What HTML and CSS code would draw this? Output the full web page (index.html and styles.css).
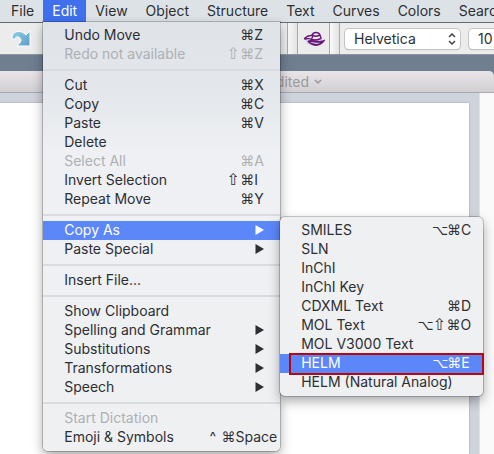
FILE: index.html
```html
<!DOCTYPE html>
<html lang="en">
<head>
<meta charset="utf-8">
<title>Edit menu</title>
<link rel="stylesheet" href="styles.css">
</head>
<body>
<nav class="menubar" aria-label="Menu bar">
  <button class="menubar-item">File</button>
  <div class="menubar-group">
    <button class="menubar-item is-open" aria-expanded="true">Edit</button>
    <div class="menu menu-main" role="menu" aria-label="Edit">
      <button class="item" role="menuitem"><span>Undo Move</span><span class="keys"><i class="mod">⌘</i><span class="key">Z</span></span></button>
      <button class="item" role="menuitem" disabled><span>Redo not available</span><span class="keys"><i class="mod shift">⇧</i><i class="mod">⌘</i><span class="key">Z</span></span></button>
      <hr class="separator">
      <button class="item" role="menuitem"><span>Cut</span><span class="keys"><i class="mod">⌘</i><span class="key">X</span></span></button>
      <button class="item" role="menuitem"><span>Copy</span><span class="keys"><i class="mod">⌘</i><span class="key">C</span></span></button>
      <button class="item" role="menuitem"><span>Paste</span><span class="keys"><i class="mod">⌘</i><span class="key">V</span></span></button>
      <button class="item" role="menuitem"><span>Delete</span></button>
      <button class="item" role="menuitem" disabled><span>Select All</span><span class="keys"><i class="mod">⌘</i><span class="key">A</span></span></button>
      <button class="item" role="menuitem"><span>Invert Selection</span><span class="keys"><i class="mod shift">⇧</i><i class="mod">⌘</i><span class="key">I</span></span></button>
      <button class="item" role="menuitem"><span>Repeat Move</span><span class="keys"><i class="mod">⌘</i><span class="key">Y</span></span></button>
      <hr class="separator">
      <div class="submenu-group">
        <button class="item is-active" role="menuitem" aria-expanded="true"><span>Copy As</span><svg class="arrow" viewBox="0 0 9 10"><path d="M0.5 0L9 5L0.5 10Z"/></svg></button>
        <div class="menu menu-sub" role="menu" aria-label="Copy As">
          <button class="item" role="menuitem"><span>SMILES</span><span class="keys"><i class="mod option">⌥</i><i class="mod">⌘</i><span class="key">C</span></span></button>
          <button class="item" role="menuitem"><span>SLN</span></button>
          <button class="item" role="menuitem"><span>InChI</span></button>
          <button class="item" role="menuitem"><span>InChI Key</span></button>
          <button class="item" role="menuitem"><span>CDXML Text</span><span class="keys"><i class="mod">⌘</i><span class="key">D</span></span></button>
          <button class="item" role="menuitem"><span>MOL Text</span><span class="keys"><i class="mod option">⌥</i><i class="mod shift">⇧</i><i class="mod">⌘</i><span class="key">O</span></span></button>
          <button class="item" role="menuitem"><span>MOL V3000 Text</span></button>
          <button class="item is-active is-marked" role="menuitem"><span>HELM</span><span class="keys"><i class="mod option">⌥</i><i class="mod">⌘</i><span class="key">E</span></span></button>
          <button class="item" role="menuitem"><span>HELM (Natural Analog)</span></button>
        </div>
      </div>
      <button class="item" role="menuitem"><span>Paste Special</span><svg class="arrow" viewBox="0 0 9 10"><path d="M0.5 0L9 5L0.5 10Z"/></svg></button>
      <hr class="separator">
      <button class="item" role="menuitem"><span>Insert File...</span></button>
      <hr class="separator">
      <button class="item" role="menuitem"><span>Show Clipboard</span></button>
      <button class="item" role="menuitem"><span>Spelling and Grammar</span><svg class="arrow" viewBox="0 0 9 10"><path d="M0.5 0L9 5L0.5 10Z"/></svg></button>
      <button class="item" role="menuitem"><span>Substitutions</span><svg class="arrow" viewBox="0 0 9 10"><path d="M0.5 0L9 5L0.5 10Z"/></svg></button>
      <button class="item" role="menuitem"><span>Transformations</span><svg class="arrow" viewBox="0 0 9 10"><path d="M0.5 0L9 5L0.5 10Z"/></svg></button>
      <button class="item" role="menuitem"><span>Speech</span><svg class="arrow" viewBox="0 0 9 10"><path d="M0.5 0L9 5L0.5 10Z"/></svg></button>
      <hr class="separator">
      <button class="item" role="menuitem" disabled><span>Start Dictation</span></button>
      <button class="item item-wide" role="menuitem"><span>Emoji &amp; Symbols</span><span class="keys"><span class="caret">^</span><i class="mod">⌘</i><span class="key">Space</span></span></button>
    </div>
  </div>
  <button class="menubar-item">View</button>
  <button class="menubar-item">Object</button>
  <button class="menubar-item">Structure</button>
  <button class="menubar-item">Text</button>
  <button class="menubar-item">Curves</button>
  <button class="menubar-item">Colors</button>
  <button class="menubar-item">Search</button>
</nav>
<div class="toolbar">
  <button class="tool tool-redo" aria-label="Redo">
    <svg width="20" height="18" viewBox="0 0 20 18"><defs><linearGradient id="redo" x1="0" y1="0" x2="1" y2="1"><stop offset="0" stop-color="#8fd0e8"/><stop offset="1" stop-color="#5b9cc6"/></linearGradient></defs><path fill="url(#redo)" stroke="#fff" stroke-width="1" d="M1 8C1 3 5 1 9 1.500C12 2 14 4 15 5L19 1V16H6L9.500 12C11 9 8 6 5.500 7C4 7.500 4 9 4 10Z"/></svg>
  </button>
  <div class="tool-space"></div>
  <div class="grip"></div>
  <button class="tool tool-lips" aria-label="Structure perspective">
    <svg width="22" height="16" viewBox="0 0 22 16"><path fill="#c9c3f0" opacity=".6" d="M1 6L6 9L20 9L18 13L10 15L4 13Z"/><g fill="none" stroke="#681477" stroke-linecap="round"><path stroke-width="1.400" d="M1.500 7.500Q5 4 9 4.500M9 4Q10 1.500 13 1.500Q16 1.500 17 4L18 7M2 8Q6 7 9 8.500T18 7.500M10 4.500Q13 6 16 4.500M10 5L9 7"/><path stroke-width="1.800" d="M5.500 10.500Q7 9.500 12 10.500T20.500 10Q18 13.500 13 14Q8 13.500 5.500 10.500"/></g></svg>
  </button>
  <div class="grip"></div>
  <div class="field field-font">
    <select class="select" aria-label="Font"><option>Helvetica</option></select>
    <svg class="chevrons" width="8" height="12" viewBox="0 0 8 12"><path d="M1 4L4 1L7 4M1 8L4 11L7 8"/></svg>
  </div>
  <div class="field field-size"><input class="input" aria-label="Font size" value="10"></div>
</div>
<main class="window">
  <header class="titlebar"><span class="title">Edited</span><svg width="8" height="6" viewBox="0 0 8 6"><path d="M1 1L4 4L7 1"/></svg></header>
  <div class="canvas">
    <div class="paper"></div>
    <div class="scroller"></div>
  </div>
</main>
</body>
</html>
```
FILE: styles.css
```css
* { box-sizing: border-box; }

body {
  margin: 0;
  min-height: 100vh;
  display: flex;
  flex-direction: column;
  overflow: hidden;
  background: #6f7f90;
  color: #2d2f33;
  font: 14px/18px Inter, sans-serif;
}

button, select, input {
  border: 0;
  margin: 0;
  padding: 0;
  background: none;
  color: inherit;
  font: inherit;
}

hr { margin: 0; border: 0; }

.menubar {
  flex: none;
  display: flex;
  height: 23px;
  padding-left: 2px;
  background: #dde2e6;
  border-bottom: 1px solid #5f6c7a;
}

.menubar-item {
  flex: none;
  height: 22px;
  padding: 0 9px 1px;
  white-space: nowrap;
}

.menubar-item.is-open { background: #4070ee; color: #fff; }
.menubar-group { position: relative; }

.menu {
  position: absolute;
  background: #eff0f2;
  box-shadow: 0 0 0 1px rgba(0, 0, 0, .2), 0 5px 12px rgba(0, 0, 0, .35);
}

.menu-main {
  top: 22px;
  left: 0;
  z-index: 1;
  width: 237px;
  padding: 4px 0;
  border-radius: 0 0 5px 5px;
  background: linear-gradient(#dfe3e7, #e4e7eb 70px, #eef0f3 130px, #eff0f2);
}

.menu-sub {
  top: -4px;
  left: 100%;
  width: 203px;
  padding: 4px 0;
  border-radius: 5px;
}

.submenu-group { position: relative; }

.item {
  display: flex;
  align-items: center;
  justify-content: space-between;
  width: 100%;
  height: 19px;
  padding: 0 16px 1px 21px;
  white-space: nowrap;
  text-align: left;
}

.menu-sub .item { padding-right: 12px; }
.item:disabled { color: #adb0b4; }
.item.is-active { background: #5c87f9; color: #fff; }
.menu-main .item-wide { padding-right: 3px; }

.is-marked { position: relative; }
.is-marked::after {
  content: "";
  position: absolute;
  inset: -1px -1px -2px 9px;
  border: 2px solid #b90510;
}

.keys { display: flex; align-items: center; }
.key { min-width: 10px; }
.mod {
  width: 14px;
  font: 14px/18px "DejaVu Sans", sans-serif;
}
.mod.shift { font-size: 16px; }
.mod.option { width: 15px; }
.caret { width: 12px; }

.arrow { width: 9px; height: 10px; fill: currentColor; }

.separator {
  height: 12px;
  padding-top: 5px;
}
.separator::before {
  content: "";
  display: block;
  height: 2px;
  background: #d9dbde;
}

.toolbar {
  flex: none;
  display: flex;
  align-items: center;
  height: 32px;
  background: #ececec;
  border-bottom: 1px solid #8d969f;
}

.tool { display: grid; place-items: center; }
.tool-redo { width: 42px; }
.tool-space { width: 245px; }
.tool-lips { width: 31px; }

.grip {
  width: 11px;
  height: 31px;
  border: 1px solid #aaa;
  border-width: 0 1px;
  background: linear-gradient(90deg, #fafafa, #e2e2e2);
}

.field {
  display: flex;
  align-items: center;
  height: 20px;
  margin-left: 5px;
  border-radius: 4px;
  background: #fff;
  box-shadow: 0 0 0 1px #c4c4c4, 0 1px 1px #999;
}
.field-font { width: 115px; padding-right: 4px; }
.field-size { flex: 1; margin-left: 9px; border-radius: 4px 0 0 4px; }
.select { flex: 1; min-width: 0; appearance: none; padding-left: 9px; }
.input { width: 100%; padding-left: 9px; }
.chevrons { fill: none; stroke: #444; stroke-width: 1.5; }

.window {
  flex: 1;
  display: flex;
  flex-direction: column;
  margin-top: 16px;
}

.titlebar {
  display: flex;
  align-items: center;
  justify-content: flex-end;
  gap: 5px;
  height: 22px;
  padding-right: 172px;
  border-radius: 0 5px 0 0;
  border-bottom: 1px solid #aaa8ab;
  background: linear-gradient(#e8e4e8, #d2cfd3);
  color: #9c9a9d;
}
.titlebar svg { fill: none; stroke: #99979a; stroke-width: 1.5; }

.canvas { flex: 1; display: flex; background: #ced3dc; }
.paper {
  flex: 1;
  margin: 10px 10px 0 0;
  background: #fff;
  box-shadow: 0 0 2px #999fa8;
}
.scroller { width: 15px; background: #fafafa; border-left: 1px solid #e3e3e3; }
```
